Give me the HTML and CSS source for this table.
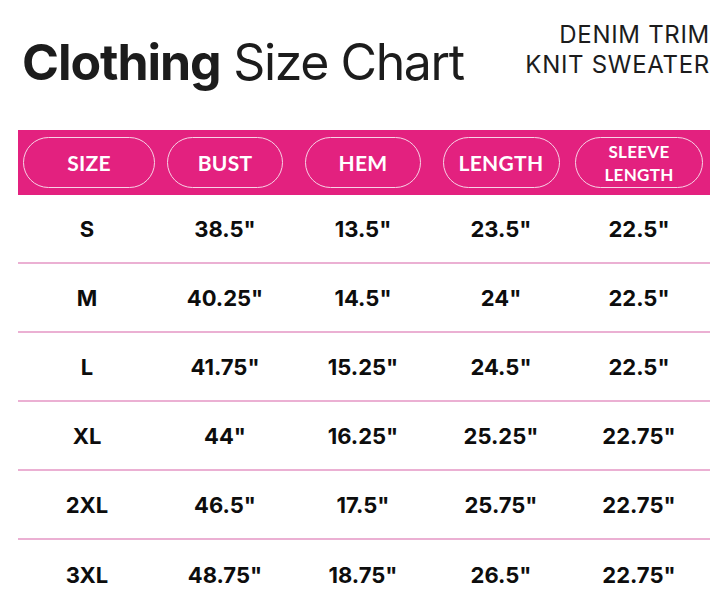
FILE: index.html
```html
<!DOCTYPE html>
<html>
<head>
<meta charset="utf-8">
<link rel="stylesheet" href="styles.css">
</head>
<body>
<div class="page">
  <header class="top">
    <h1 class="title"><b>Clothing</b> Size Chart</h1>
    <div class="product">DENIM TRIM<br>KNIT SWEATER</div>
  </header>
  <div class="chart">
    <div class="head">
      <div class="pill p-size">SIZE</div>
      <div class="pill p-bust">BUST</div>
      <div class="pill p-hem">HEM</div>
      <div class="pill p-length">LENGTH</div>
      <div class="pill p-sleeve">SLEEVE<br>LENGTH</div>
    </div>
    <div class="row r70"><span>S</span><span>38.5"</span><span>13.5"</span><span>23.5"</span><span>22.5"</span></div>
    <div class="row"><span>M</span><span>40.25"</span><span>14.5"</span><span>24"</span><span>22.5"</span></div>
    <div class="row"><span>L</span><span>41.75"</span><span>15.25"</span><span>24.5"</span><span>22.5"</span></div>
    <div class="row r70"><span>XL</span><span>44"</span><span>16.25"</span><span>25.25"</span><span>22.75"</span></div>
    <div class="row"><span>2XL</span><span>46.5"</span><span>17.5"</span><span>25.75"</span><span>22.75"</span></div>
    <div class="row last"><span>3XL</span><span>48.75"</span><span>18.75"</span><span>26.5"</span><span>22.75"</span></div>
  </div>
</div>
</body>
</html>
```
FILE: styles.css
```css
* { box-sizing: border-box; }
html, body { margin: 0; padding: 0; background: #fff; }
body { width: 720px; height: 605px; overflow: hidden; font-family: Inter, "Liberation Sans", sans-serif; color: #111; }
.page { padding: 0 10px 0 18px; }
.top { display: flex; justify-content: space-between; align-items: flex-start; height: 130px; }
.title { margin: 32px 0 0 4px; font-size: 50px; font-weight: 400; letter-spacing: -1.4px; color: #1c1c1c; line-height: 60px; }
.title b { font-weight: 700; letter-spacing: -1.05px; }
.product { margin-top: 20px; text-align: right; font-size: 24px; line-height: 30px; letter-spacing: 0.7px; color: #1c1c1c; }
.chart { width: 692px; }
.head { height: 65px; background: #e3217f; display: grid; grid-template-columns: repeat(5, 138px); align-items: center; }
.pill { justify-self: center; width: 122px; height: 51px; border: 1.5px solid #f7d3e6; border-radius: 26px; color: #fff; font-family: Lato, "Open Sans", sans-serif; font-weight: 700; font-size: 21px; display: flex; align-items: center; justify-content: center; text-align: center; letter-spacing: 0.3px; }
.p-size { width: 132px; margin-left: 4px; }
.p-bust { width: 116px; }
.p-hem { width: 116px; }
.p-length { width: 117px; }
.p-sleeve { width: 128px; font-size: 17px; line-height: 23px; }
.row { display: grid; grid-template-columns: repeat(5, 138px); height: 69px; align-items: center; border-bottom: 2px solid #ebb0d3; font-weight: 700; font-size: 22px; color: #0d0d0d; }
.row.r70 { height: 69px; }
.row span { text-align: center; }
.row.last { border-bottom: none; }
```
